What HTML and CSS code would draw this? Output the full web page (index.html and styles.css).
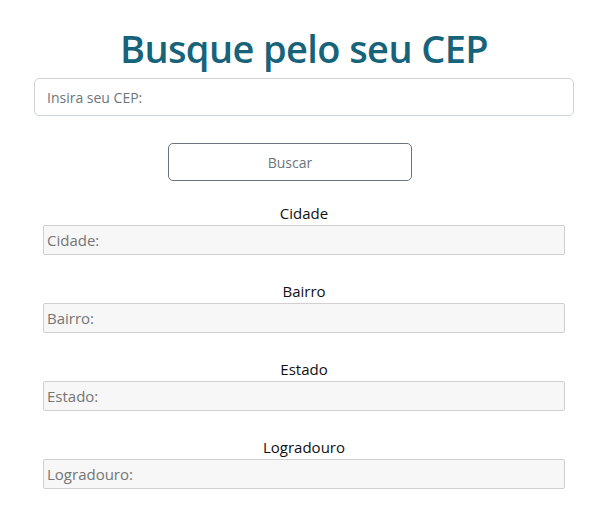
FILE: index.html
```html
<!DOCTYPE html>
<html lang="pt-BR">
<head>
<meta charset="utf-8">
<title>Busque pelo seu CEP</title>
<link rel="stylesheet" href="styles.css">
</head>
<body>
<main class="page">
  <h1 class="title">Busque pelo seu CEP</h1>
  <input class="cep-input" type="text" placeholder="Insira seu CEP:">
  <div class="actions">
    <button class="btn-search" type="button">Buscar</button>
  </div>
  <div class="fields">
    <div class="field">
      <label class="field-label">Cidade</label>
      <input class="field-input" type="text" placeholder="Cidade:" readonly>
    </div>
    <div class="field">
      <label class="field-label">Bairro</label>
      <input class="field-input" type="text" placeholder="Bairro:" readonly>
    </div>
    <div class="field">
      <label class="field-label">Estado</label>
      <input class="field-input" type="text" placeholder="Estado:" readonly>
    </div>
    <div class="field">
      <label class="field-label">Logradouro</label>
      <input class="field-input" type="text" placeholder="Logradouro:" readonly>
    </div>
  </div>
</main>
</body>
</html>
```

FILE: styles.css
```css
* { box-sizing: border-box; }
html, body { margin: 0; padding: 0; background: #fff; }
body {
  font-family: "Open Sans", "Noto Sans", sans-serif;
  color: #212529;
}
.page {
  width: 540px;
  margin: 0 0 0 34px;
  padding-top: 18px;
  display: flex;
  flex-direction: column;
}
.title {
  margin: 0;
  text-align: center;
  font-size: 38px;
  font-weight: 600;
  line-height: 60px;
  color: #17637a;
  letter-spacing: -0.6px;
}
.cep-input {
  width: 540px;
  height: 38px;
  border: 1px solid #ced4da;
  border-radius: 5px;
  padding: 0 12px;
  font-family: inherit;
  font-size: 14px;
  color: #495057;
  outline: none;
}
.cep-input::placeholder { color: #6c757d; }
.actions {
  display: flex;
  justify-content: flex-start;
  padding: 27px 0 0 134px;
}
.btn-search {
  width: 244px;
  height: 38px;
  border: 1px solid #6c757d;
  border-radius: 5px;
  background: #fff;
  font-family: inherit;
  font-size: 14px;
  color: #6c757d;
}
.fields {
  display: flex;
  flex-direction: column;
  gap: 25px;
  padding: 21px 9px 0 9px;
}
.field {
  display: flex;
  flex-direction: column;
  align-items: center;
}
.field-label {
  font-size: 15px;
  line-height: 22px;
  color: #111;
  margin-bottom: 1px;
}
.field-input {
  width: 522px;
  height: 30px;
  border: 1px solid #d0d0d0;
  border-radius: 2px;
  background: #f7f7f7;
  padding: 0 3px;
  font-family: inherit;
  font-size: 15px;
  color: #555;
  outline: none;
}
.field-input::placeholder { color: #757575; }
```
